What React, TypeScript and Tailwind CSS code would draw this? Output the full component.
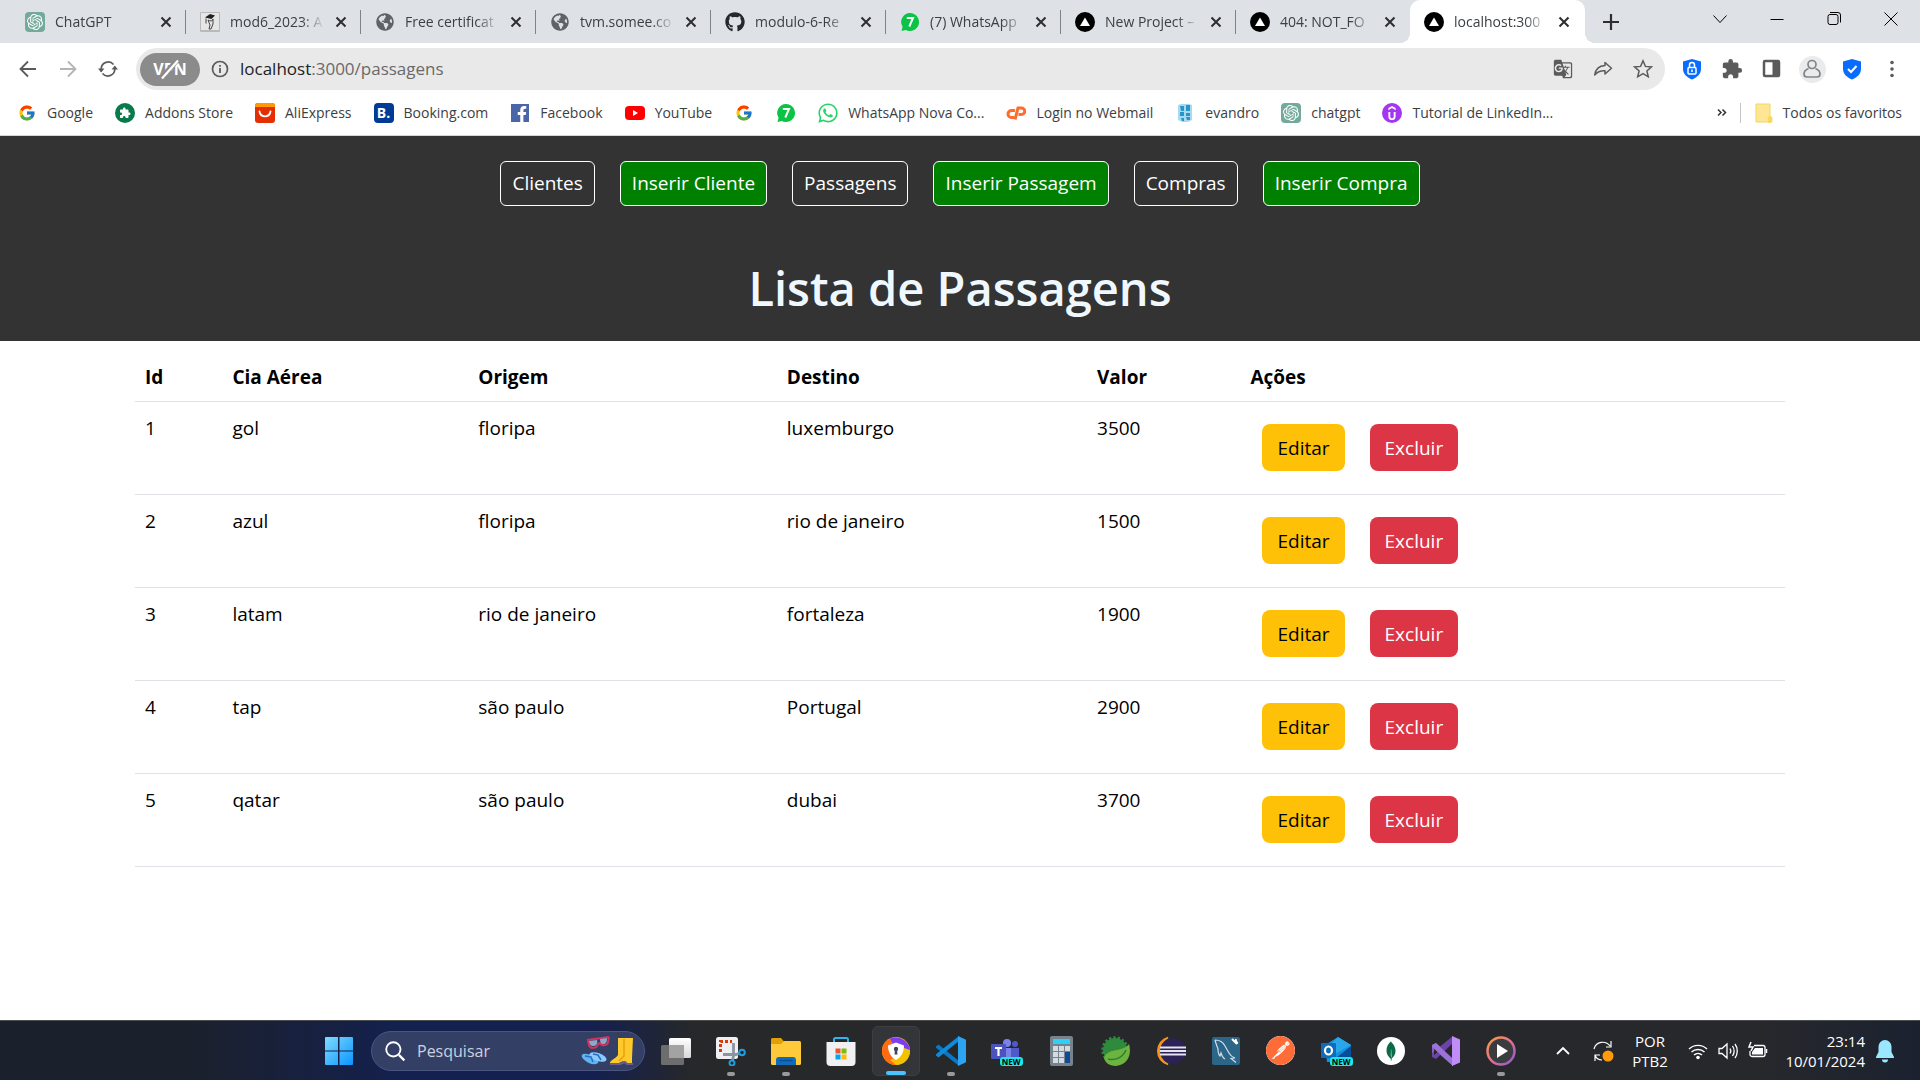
import type { ReactNode } from "react";
import { FcGoogle } from "react-icons/fc";
import { FaFacebookF, FaGithub, FaWhatsapp, FaGlobeAmericas } from "react-icons/fa";
import { SiMongodb, SiOpenai, SiPostman, SiUdemy } from "react-icons/si";
import { MdExtension, MdGTranslate } from "react-icons/md";

/* ---------- favicons ---------- */

const GptIcon = () => (
  <span className="flex size-5 items-center justify-center rounded bg-[#74aa9c] text-white">
    <SiOpenai className="size-4" />
  </span>
);

const GlobeIcon = () => <FaGlobeAmericas className="size-[18px] text-[#5f6368]" />;

const MoodleIcon = () => (
  <svg viewBox="0 0 20 20" className="size-5">
    <rect x="0" y="0" width="20" height="20" rx="1" fill="#b9b9b9" />
    <rect x="1" y="1" width="18" height="17" fill="#e6e6e6" />
    <path d="M5 5.500 10 2l5 1.500-3.500 3.500z" fill="#222" />
    <path d="M6 6.500v5M8 8c2 1.500 5 1 5-1v5l-2 5H9l1-4z" stroke="#444" strokeWidth="1" fill="none" />
  </svg>
);

const VercelIcon = () => (
  <svg viewBox="0 0 20 20" className="size-5">
    <circle cx="10" cy="10" r="10" fill="#000" />
    <path d="M10 5.500 15 14H5z" fill="#fff" />
  </svg>
);

const SevenIcon = () => (
  <svg viewBox="0 0 20 20" className="size-5">
    <path d="M10 1a9 9 0 1 1-4.300 16.900L1.500 19l1.100-4.200A9 9 0 0 1 10 1z" fill="#0bc344" />
    <path d="M6.800 6h6.200L9.300 14.500" fill="none" stroke="#fff" strokeWidth="2" />
  </svg>
);

const AddonsIcon = () => (
  <span className="flex size-5 items-center justify-center rounded-full bg-[#0b7a4b] text-white">
    <MdExtension className="size-3" />
  </span>
);

const AliIcon = () => (
  <svg viewBox="0 0 20 20" className="size-5">
    <rect width="20" height="20" rx="3" fill="#e62e04" />
    <path d="M0 3a3 3 0 0 1 3-3h14a3 3 0 0 1 3 3v1H0z" fill="#ff9b00" />
    <path d="M4.500 8.500c1 6.500 10 6.500 11 0" fill="none" stroke="#fff" strokeWidth="1.800" strokeLinecap="round" />
  </svg>
);

const BookingIcon = () => (
  <span className="flex size-5 items-center justify-center rounded bg-[#003b95] text-sm leading-5 font-bold text-white">B.</span>
);

const FacebookIcon = () => (
  <span className="flex h-[18px] w-[18px] items-end justify-center bg-[#4a66a6] pl-1 text-white">
    <FaFacebookF className="size-4" />
  </span>
);

const YoutubeIcon = () => (
  <svg viewBox="0 0 20 20" className="size-5">
    <rect y="3" width="20" height="14" rx="4" fill="#f00" />
    <path d="M8 7v6l5-3z" fill="#fff" />
  </svg>
);

const CpanelIcon = () => (
  <svg viewBox="0 0 20 20" className="size-5" fill="none" stroke="#ff6c2c" strokeWidth="3">
    <path d="M9 7.500H5.500a3.500 3.500 0 0 0 0 7H8" />
    <path d="M9 16.500 12 5h3.500a3.200 3.200 0 0 1 0 6.500h-3" />
  </svg>
);

const EvandroIcon = () => (
  <svg viewBox="0 0 20 20" className="size-5">
    <path d="M3 2l3-1h8l3 1v15l-4 2H7l-4-2z" fill="#a9d9ef" />
    <path d="M5 3h4v5H6zM11 2h4v6h-4zM5 9h4v4H5zM11 10h4v3h-4zM6 15h3v3H7zM11 14h4v3h-3z" fill="#2596c9" />
  </svg>
);

const UdemyIcon = () => (
  <span className="flex size-5 items-center justify-center rounded-full bg-[#a435f0] text-white">
    <SiUdemy className="size-3.5" />
  </span>
);

const FolderIcon = () => (
  <svg viewBox="0 0 18 20" className="h-5 w-[18px]">
    <path d="M1 1h14v12.500a2 2 0 0 1 2 2V17a2 2 0 0 1-2 2H1z" fill="#ffe694" stroke="#f5d560" />
    <path d="M13 19v-4a2 2 0 0 1 4 0v2a2 2 0 0 1-4 2z" fill="#f8d766" />
  </svg>
);

/* ---------- toolbar drawings ---------- */

const Stroke = ({ children, className }: { children: ReactNode; className: string }) => (
  <svg viewBox="0 0 20 20" className={className} fill="none" stroke="currentColor">
    {children}
  </svg>
);

const CloseX = () => (
  <Stroke className="size-5">
    <path d="M5.500 5.500l9 9M14.500 5.500l-9 9" strokeWidth="2" />
  </Stroke>
);

const Shield = ({ children }: { children: ReactNode }) => (
  <svg viewBox="0 0 20 22" className="h-[22px] w-5" fill="none">
    <path d="M10 1 19 3.500V11c0 5-4 8.500-9 10.500C5 19.500 1 16 1 11V3.500z" fill="#0a6cff" />
    {children}
  </svg>
);

/* ---------- page data ---------- */

type Tab = { title: string; icon: ReactNode; active?: boolean };

const tabs: Tab[] = [
  { title: "ChatGPT", icon: <GptIcon /> },
  { title: "mod6_2023: A", icon: <MoodleIcon /> },
  { title: "Free certificat", icon: <GlobeIcon /> },
  { title: "tvm.somee.co", icon: <GlobeIcon /> },
  { title: "modulo-6-Re", icon: <FaGithub className="size-5 text-[#24292f]" /> },
  { title: "(7) WhatsApp", icon: <SevenIcon /> },
  { title: "New Project –", icon: <VercelIcon /> },
  { title: "404: NOT_FO", icon: <VercelIcon /> },
  { title: "localhost:300", icon: <VercelIcon />, active: true },
];

const bookmarks: { label?: string; name?: string; icon: ReactNode }[] = [
  { label: "Google", icon: <FcGoogle className="size-[18px]" /> },
  { label: "Addons Store", icon: <AddonsIcon /> },
  { label: "AliExpress", icon: <AliIcon /> },
  { label: "Booking.com", icon: <BookingIcon /> },
  { label: "Facebook", icon: <FacebookIcon /> },
  { label: "YouTube", icon: <YoutubeIcon /> },
  { name: "Google", icon: <FcGoogle className="size-[18px]" /> },
  { name: "WhatsApp", icon: <SevenIcon /> },
  { label: "WhatsApp Nova Co...", icon: <FaWhatsapp className="size-[22px] shrink-0 text-[#25d366]" /> },
  { label: "Login no Webmail", icon: <CpanelIcon /> },
  { label: "evandro", icon: <EvandroIcon /> },
  { label: "chatgpt", icon: <GptIcon /> },
  { label: "Tutorial de LinkedIn...", icon: <UdemyIcon /> },
];

const navLinks = [
  { label: "Clientes", insert: false },
  { label: "Inserir Cliente", insert: true },
  { label: "Passagens", insert: false },
  { label: "Inserir Passagem", insert: true },
  { label: "Compras", insert: false },
  { label: "Inserir Compra", insert: true },
];

const flights = [
  { id: 1, cia: "gol", origem: "floripa", destino: "luxemburgo", valor: 3500 },
  { id: 2, cia: "azul", origem: "floripa", destino: "rio de janeiro", valor: 1500 },
  { id: 3, cia: "latam", origem: "rio de janeiro", destino: "fortaleza", valor: 1900 },
  { id: 4, cia: "tap", origem: "são paulo", destino: "Portugal", valor: 2900 },
  { id: 5, cia: "qatar", origem: "são paulo", destino: "dubai", valor: 3700 },
];

/* ---------- browser chrome ---------- */

function TabStrip() {
  return (
    <div className="flex h-[43px] bg-[#dee1e6] pl-[11px]">
      {tabs.map((tab, i) => (
        <div
          key={i}
          className={
            tab.active
              ? "relative -ml-px flex w-[175px] min-w-0 items-center rounded-t-[10px] bg-white pr-[11px] pl-[14px]"
              : "flex w-[175px] min-w-0 items-center pl-[14px]"
          }
        >
          {tab.active && (
            <>
              <span className="absolute bottom-0 -left-2.5 size-2.5 bg-[radial-gradient(circle_at_0_0,#dee1e6_10px,#fff_10px)]" />
              <span className="absolute -right-2.5 bottom-0 size-2.5 bg-[radial-gradient(circle_at_100%_0,#dee1e6_10px,#fff_10px)]" />
            </>
          )}
          <span className="flex size-5 shrink-0 items-center justify-center">{tab.icon}</span>
          <span className="ml-2.5 min-w-0 flex-1 text-sm whitespace-nowrap text-[#3c4043] [mask-image:linear-gradient(to_right,#000_75%,transparent)]">
            {tab.title}
          </span>
          <button aria-label="Fechar guia" className="ml-1.5 shrink-0 text-[#2d2e30]">
            <CloseX />
          </button>
          {!tab.active && (
            <span className={i === tabs.length - 2 ? "ml-[10px] w-px" : "ml-[9px] h-6 w-px bg-[#7f8286]"} />
          )}
        </div>
      ))}
      <button aria-label="Nova guia" className="ml-4 text-[#2d2e30]">
        <Stroke className="size-5">
          <path d="M10 2v16M2 10h16" strokeWidth="2.200" />
        </Stroke>
      </button>
      <div className="ml-auto flex pr-px pb-1.5 text-black">
        <button aria-label="Pesquisar guias" className="flex w-[57px] items-center justify-center">
          <Stroke className="size-5">
            <path d="M3.500 6.500 10 13.500l6.500-7" />
          </Stroke>
        </button>
        <button aria-label="Minimizar" className="flex w-[57px] items-center justify-center">
          <Stroke className="size-5">
            <path d="M3.500 10.500h13" />
          </Stroke>
        </button>
        <button aria-label="Restaurar" className="flex w-[57px] items-center justify-center">
          <Stroke className="size-5">
            <rect x="4" y="5.500" width="10" height="10" rx="2" />
            <path d="M6 3.500h8a2.500 2.500 0 0 1 2.500 2.500v7.500" />
          </Stroke>
        </button>
        <button aria-label="Fechar" className="flex w-[57px] items-center justify-center">
          <Stroke className="size-5">
            <path d="M3.500 3.500l13 13M16.500 3.500l-13 13" />
          </Stroke>
        </button>
      </div>
    </div>
  );
}

function Toolbar() {
  return (
    <div className="flex h-[52px] items-center bg-white pl-2 text-[#5b5b5b]">
      <button aria-label="Voltar" className="flex w-10 justify-center">
        <Stroke className="size-5">
          <path d="M18 10H2.500M10 2.500 2.500 10l7.500 7.500" strokeWidth="1.800" />
        </Stroke>
      </button>
      <button aria-label="Avançar" className="flex w-10 justify-center text-[#b4b4b4]">
        <Stroke className="size-5">
          <path d="M2 10h15.500M10 2.500l7.500 7.500-7.500 7.500" strokeWidth="1.800" />
        </Stroke>
      </button>
      <button aria-label="Recarregar" className="flex w-10 justify-center">
        <Stroke className="size-5">
          <path d="M3.200 12.500V9.500a7 7 0 0 1 12.300-4M16.800 8v2.500a7 7 0 0 1-12.300 4" strokeWidth="1.700" />
          <path d="M0 9.500h6.400L3.200 13.500zM13.600 10.500H20l-3.200-4z" fill="currentColor" stroke="none" />
        </Stroke>
      </button>
      <div className="ml-2 flex h-[42px] flex-1 items-center rounded-full bg-[#e9e9e9] pr-0.5 pl-1">
        <button
          aria-label="VPN"
          className="relative flex h-[33px] w-[60px] items-center justify-center rounded-full bg-[#8b8b8b] text-base leading-5 font-bold text-white"
        >
          VPN
          <svg viewBox="0 0 24 24" className="absolute size-6" fill="none">
            <path d="M3.500 21 20 2" stroke="#8b8b8b" strokeWidth="5" />
            <path d="M4 21.500 20 3.500" stroke="#fff" strokeWidth="2.200" />
          </svg>
        </button>
        <button aria-label="Informações do site" className="ml-2.5">
          <Stroke className="size-5">
            <circle cx="10" cy="10" r="7.500" strokeWidth="1.700" />
            <path d="M10 9v5M10 6v1.700" strokeWidth="1.800" />
          </Stroke>
        </button>
        <div className="ml-2.5 flex-1 text-[17px] text-[#6a6a6a]">
          <span className="text-[#222]">localhost</span>:3000/passagens
        </div>
        <button aria-label="Traduzir" className="flex w-10 justify-center">
          <MdGTranslate className="size-5" />
        </button>
        <button aria-label="Compartilhar" className="flex w-10 justify-center">
          <Stroke className="size-5">
            <path d="M12 3.500l6.500 5.700L12 15v-3.200c-4.500-.3-7.500 1-10.300 4.200C2.500 10.500 6 7 12 6.600z" strokeWidth="1.500" strokeLinejoin="round" />
          </Stroke>
        </button>
        <button aria-label="Favoritar" className="flex w-10 justify-center">
          <Stroke className="size-5">
            <path
              d="M10 1.800l2.400 5.600 6.100.5-4.600 4 1.400 5.900L10 14.700l-5.300 3.100 1.400-5.900-4.600-4 6.100-.5z"
              strokeWidth="1.500"
            />
          </Stroke>
        </button>
      </div>
      <div className="flex items-center pr-2 pl-[7px]">
        <button aria-label="Proteção" className="flex w-10 justify-center">
          <Shield>
            <rect x="6" y="9.500" width="8" height="6.500" rx="1" stroke="#fff" strokeWidth="1.500" />
            <path d="M7.500 9V7a2.500 2.500 0 0 1 5 0v2M10 11.500v2.500" stroke="#fff" strokeWidth="1.500" />
          </Shield>
        </button>
        <button aria-label="Extensões" className="flex w-10 justify-center">
          <MdExtension className="size-[22px]" />
        </button>
        <button aria-label="Painel lateral" className="flex w-10 justify-center">
          <Stroke className="size-5">
            <rect x="2" y="2" width="15" height="15" rx="1" strokeWidth="2.500" />
            <path d="M11 2h6v15h-6z" fill="currentColor" />
          </Stroke>
        </button>
        <button aria-label="Perfil" className="flex w-10 justify-center">
          <span className="flex size-[27px] items-center justify-center rounded-full bg-[#ebebec] text-[#7f868c]">
            <Stroke className="size-5">
              <circle cx="10" cy="5.500" r="4" strokeWidth="1.700" />
              <path d="M6.500 9.500c-3 1.200-4.500 3-4.500 5.500 0 2 1 3 3 3h10c2 0 3-1 3-3 0-2.500-1.500-4.300-4.500-5.500" strokeWidth="1.700" />
            </Stroke>
          </span>
        </button>
        <button aria-label="Segurança" className="flex w-10 justify-center">
          <Shield>
            <path d="M6 11l3 3 5.500-6" stroke="#fff" strokeWidth="2" />
          </Shield>
        </button>
        <button aria-label="Menu" className="flex w-10 justify-center">
          <svg viewBox="0 0 20 20" className="size-5" fill="currentColor">
            <circle cx="10" cy="3.500" r="1.800" />
            <circle cx="10" cy="10" r="1.800" />
            <circle cx="10" cy="16.500" r="1.800" />
          </svg>
        </button>
      </div>
    </div>
  );
}

function BookmarkBar() {
  return (
    <div className="flex h-[41px] items-center border-b border-[#d5d5d5] bg-white pr-[18px] pb-1 pl-[17px] text-sm whitespace-nowrap text-[#3c4043]">
      <div className="flex items-center gap-[22px]">
        {bookmarks.map((b, i) => (
          <a key={i} href="#" aria-label={b.label ?? b.name} className="flex items-center gap-2.5">
            <span className="flex size-5 items-center justify-center">{b.icon}</span>
            {b.label}
          </a>
        ))}
      </div>
      <button aria-label="Mais favoritos" className="ml-auto">
        <Stroke className="size-5 text-[#333]">
          <path d="M6 6.500l3 3-3 3M10.500 6.500l3 3-3 3" strokeWidth="1.500" />
        </Stroke>
      </button>
      <span className="mr-3.5 ml-2 h-5 w-px bg-[#c4c4c4]" />
      <button className="flex items-center gap-2.5">
        <FolderIcon />
        Todos os favoritos
      </button>
    </div>
  );
}

/* ---------- application ---------- */

function Header() {
  return (
    <header className="flex flex-col items-center bg-[#333] pt-[25px] pb-[21px]">
      <nav className="flex gap-[25px]">
        {navLinks.map((link) => (
          <a
            key={link.label}
            href="#"
            className={
              link.insert
                ? "rounded-md border border-white bg-[#008000] px-[11px] py-2 text-[19px] leading-[27px] text-white"
                : "rounded-md border border-white px-[11px] py-2 text-[19px] leading-[27px] text-white"
            }
          >
            {link.label}
          </a>
        ))}
      </nav>
      <h1 className="mt-[50px] text-[47px] leading-[64px] font-semibold text-[aliceblue]">Lista de Passagens</h1>
    </header>
  );
}

function FlightTable() {
  return (
    <table className="w-full table-fixed text-left text-[19px] leading-[30px] text-black">
      <colgroup>
        <col className="w-[5.300%]" />
        <col className="w-[14.900%]" />
        <col className="w-[18.700%]" />
        <col className="w-[18.800%]" />
        <col className="w-[9.300%]" />
        <col />
      </colgroup>
      <thead>
        <tr className="border-b border-[#dee2e6]">
          {["Id", "Cia Aérea", "Origem", "Destino", "Valor", "Ações"].map((h) => (
            <th key={h} scope="col" className="px-2.5 pt-[21px] pb-[9px] font-bold">
              {h}
            </th>
          ))}
        </tr>
      </thead>
      <tbody>
        {flights.map((f) => (
          <tr key={f.id} className="border-b border-[#dee2e6] align-top">
            <td className="px-2.5 pt-[11px]">{f.id}</td>
            <td className="px-2.5 pt-[11px]">{f.cia}</td>
            <td className="px-2.5 pt-[11px]">{f.origem}</td>
            <td className="px-2.5 pt-[11px]">{f.destino}</td>
            <td className="px-2.5 pt-[11px]">{f.valor}</td>
            <td className="px-2.5">
              <div className="flex gap-[25px] px-3 pt-[22px] pb-[23px]">
                <button className="rounded-lg bg-[#ffc107] px-[15px] pt-[9px] pb-2 text-black">Editar</button>
                <button className="rounded-lg bg-[#dc3545] px-[15px] pt-[9px] pb-2 text-white">Excluir</button>
              </div>
            </td>
          </tr>
        ))}
      </tbody>
    </table>
  );
}

/* ---------- taskbar ---------- */

const Art = ({ children }: { children: ReactNode }) => (
  <svg viewBox="0 0 30 30" className="size-[30px]" fill="none">
    {children}
  </svg>
);

const NewBadge = () => (
  <span className="absolute -right-0.5 bottom-0 rounded-[3px] bg-[#1ee6e6] px-0.5 text-[8px] leading-[9px] font-bold text-black">NEW</span>
);

type App = { name: string; icon: ReactNode; running?: boolean; focused?: boolean };

const apps: App[] = [
  {
    name: "Visão de tarefas",
    icon: (
      <Art>
        <defs>
          <linearGradient id="tv" x2="0" y2="1">
            <stop stopColor="#fff" />
            <stop offset="1" stopColor="#d8d8d8" />
          </linearGradient>
        </defs>
        <rect x="8" y="2" width="22" height="20" rx="1.500" fill="url(#tv)" />
        <rect x="0" y="9" width="23" height="20" rx="1.500" fill="#6d6d6d" />
        <path d="M8 9h15v13H8z" fill="#a3a3a3" />
      </Art>
    ),
  },
  {
    name: "Ferramenta de Captura",
    running: true,
    icon: (
      <Art>
        <rect x="0" y="1" width="22" height="22" rx="2.500" fill="#f0f0f4" />
        <path d="M4.500 16V5.500H16" stroke="#d83b01" strokeWidth="3" strokeDasharray="3 2" />
        <path d="M17.500 7v13l-1 4M7 18.500h13l4-1.500" stroke="#8b959e" strokeWidth="2.800" />
        <circle cx="26" cy="16.500" r="2.800" stroke="#1f9de0" strokeWidth="2" />
        <circle cx="16" cy="27" r="2.500" stroke="#1f9de0" strokeWidth="2" />
      </Art>
    ),
  },
  {
    name: "Explorador de Arquivos",
    running: true,
    icon: (
      <Art>
        <path d="M0 3.500A1.500 1.500 0 0 1 1.500 2H10l3 3.500v5H0z" fill="#e2a008" />
        <path d="M0 8h10l3-3h15.500A1.500 1.500 0 0 1 30 6.500v21a1.500 1.500 0 0 1-1.500 1.500h-27A1.500 1.500 0 0 1 0 27.500z" fill="#ffca3a" />
        <path d="M5 29v-5a3 3 0 0 1 3-3h14a3 3 0 0 1 3 3v5z" fill="#0f6cbd" />
        <path d="M8.500 24.500h13" stroke="#0a4f91" strokeWidth="1.500" />
      </Art>
    ),
  },
  {
    name: "Microsoft Store",
    icon: (
      <Art>
        <path d="M8 7V3.500A1.500 1.500 0 0 1 9.500 2h11A1.500 1.500 0 0 1 22 3.500V7" stroke="#2fb4f2" strokeWidth="2" />
        <path d="M.5 6h29v20a4 4 0 0 1-4 4h-21a4 4 0 0 1-4-4z" fill="#f1f1f3" />
        <path d="M9.500 12.500h5v5h-5z" fill="#f35325" />
        <path d="M15.500 12.500h5v5h-5z" fill="#81bc06" />
        <path d="M9.500 18.500h5v5h-5z" fill="#05a6f0" />
        <path d="M15.500 18.500h5v5h-5z" fill="#ffba08" />
      </Art>
    ),
  },
  {
    name: "Navegador",
    running: true,
    focused: true,
    icon: (
      <Art>
        <circle cx="15" cy="15" r="14" fill="#ffb20e" />
        <path d="M15 29C7.300 29 1 22.700 1 15 1 9 5 4 10 2l6 9-2 12z" fill="#ff6a13" />
        <path d="M9 2.500C17-1 28 4 29 14c-2 2-4 2-6-1L12 8z" fill="#7c3df0" />
        <path d="M29 14c0 8-5 14.500-14 15l-6-5 12-6 2-6z" fill="#f2c200" />
        <path d="M15 6.500l8 3c0 7-3 11.500-8 14.500-5-3-8-7.500-8-14.500z" fill="#fff" />
        <circle cx="15" cy="13" r="2.200" fill="#3d4657" />
        <path d="M14 14h2l.5 4.500h-3z" fill="#3d4657" />
      </Art>
    ),
  },
  {
    name: "Visual Studio Code",
    running: true,
    icon: (
      <Art>
        <path d="M0 10.500 2.500 8.500 23 25v5L0 11.800z" fill="#0879c8" />
        <path d="M0 19.500 2.500 21.500 23 5V0L0 18.200z" fill="#0e8bdb" />
        <path d="M22 0l7 3.200c.6.300 1 .8 1 1.500v20.600c0 .7-.4 1.200-1 1.500L22 30z" fill="#2da4f2" />
      </Art>
    ),
  },
  {
    name: "Microsoft Teams",
    icon: (
      <>
        <Art>
          <circle cx="16" cy="7" r="4" fill="#7b83eb" />
          <circle cx="24" cy="8" r="3" fill="#5059c9" />
          <path d="M18 12h10v12H18z" fill="#5059c9" />
          <path d="M10 12h10v13H10z" fill="#7b83eb" />
          <rect x="0" y="8" width="15" height="15" rx="1" fill="#4b53bc" />
          <path d="M4 12h7M7.500 12v8" stroke="#fff" strokeWidth="2.200" />
        </Art>
        <NewBadge />
      </>
    ),
  },
  {
    name: "Calculadora",
    icon: (
      <Art>
        <rect x="4" y="0" width="23" height="30" rx="2" fill="#77828c" />
        <rect x="7" y="3" width="17" height="5" fill="#2fd0f5" />
        <path d="M7 10h5v5H7zM13 10h5v5h-5zM19 10h5v5h-5zM7 16h5v5H7zM13 16h5v5h-5zM7 22h5v5H7zM13 22h5v5h-5z" fill="#d3dbe2" />
        <path d="M19 16h5v11h-5z" fill="#0f4a94" />
      </Art>
    ),
  },
  {
    name: "Spring Tool Suite",
    icon: (
      <Art>
        <circle cx="14" cy="14" r="12" fill="#2e8b3d" stroke="#2e8b3d" strokeWidth="3.500" strokeDasharray="2.200 2" />
        <path d="M28 8c3 10-1 21-13 22C9 30 4 27 3 22c4-11 18-5 25-14z" fill="#6db33f" />
        <path d="M7 23c8 2 15-2 18-9" stroke="#2e7d32" strokeWidth="1.500" />
      </Art>
    ),
  },
  {
    name: "Eclipse",
    icon: (
      <Art>
        <path d="M12 1.500a14 14 0 0 0 0 27A16 16 0 0 1 12 1.500z" stroke="#f7941e" strokeWidth="1.500" fill="#f7941e" />
        <circle cx="17" cy="15" r="13" fill="#2c2255" />
        <path d="M4 11.500h26M4 15h26M4 18.500h26" stroke="#e6e3f0" strokeWidth="2" />
      </Art>
    ),
  },
  {
    name: "MySQL Workbench",
    icon: (
      <Art>
        <rect x="1" y="1" width="28" height="28" rx="2" fill="#2b6587" />
        <path
          d="M4 4c4 0 8 2 10 6l4 7c1 2 3 4 6 5l-4 .500 5 4M4 4c1 4 2 6 3 9 0 3 0 5 2 7l1-3c1 3 2 5 4 6"
          stroke="#cfe0ea"
          strokeWidth="1.200"
        />
        <path d="M21 3l5 5m-1-5a3 3 0 0 0 2 4" stroke="#fff" strokeWidth="2" />
      </Art>
    ),
  },
  { name: "Postman", icon: <SiPostman className="size-[29px] rounded-full bg-white text-[#ff6c37]" /> },
  {
    name: "Outlook",
    icon: (
      <>
        <Art>
          <path d="M4 9 17 1l13 8v17H6z" fill="#1490df" />
          <path d="M17 1l13 8-16 9-7-7z" fill="#28a8ea" />
          <path d="M30 10v16H10z" fill="#0a4c9c" />
          <rect x="0" y="7" width="15" height="15" rx="1" fill="#0f6cbd" />
          <ellipse cx="7.500" cy="14.500" rx="3.500" ry="4" stroke="#fff" strokeWidth="2.200" />
        </Art>
        <NewBadge />
      </>
    ),
  },
  {
    name: "MongoDB Compass",
    icon: (
      <span className="flex size-[28px] items-center justify-center rounded-full bg-white text-[#0a6b4b]">
        <SiMongodb className="size-5" />
      </span>
    ),
  },
  {
    name: "Visual Studio",
    icon: (
      <Art>
        <path d="M1 9l4-2 17 16v7L3 13v8l-2-1z" fill="#8661c5" />
        <path d="M1 21l4 2L22 7V0L1 17z" fill="#6c44a8" />
        <path d="M3 12l5 3-5 4z" fill="#26282b" />
        <path d="M5 7l17 16v7L1 11V9z" fill="#9a72d8" />
        <path d="M21 0l8 3.500v23L21 30z" fill="#c08cf5" />
      </Art>
    ),
  },
  {
    name: "Filmes e TV",
    running: true,
    icon: (
      <Art>
        <defs>
          <linearGradient id="mv" x2="1" y2="1">
            <stop stopColor="#ff9d3c" />
            <stop offset="0.500" stopColor="#e0708f" />
            <stop offset="1" stopColor="#8f55d8" />
          </linearGradient>
        </defs>
        <circle cx="15" cy="15" r="13.500" stroke="url(#mv)" strokeWidth="2.500" fill="#3a3c3f" />
        <path d="M11 8v14l11-7z" fill="#fff" />
      </Art>
    ),
  },
];

function SummerArt() {
  return (
    <svg viewBox="0 0 54 30" className="h-[30px] w-[54px]" fill="none">
      <path d="M7 4l22-3M8 5l1 4c1 4 8 4 9-1l2-1c2 4 8 2 8-1l1-5" stroke="#d4335c" strokeWidth="2" />
      <path d="M9 5l8-1c1 4-1 6-4 6-2 0-4-2-4-5zM20 3l7-1c0 4-1 6-4 6-2 0-3-2-3-5z" fill="#8ea6c8" />
      <ellipse cx="10" cy="23" rx="9" ry="4" transform="rotate(25 10 23)" fill="#5fb4f5" />
      <ellipse cx="18" cy="21" rx="9" ry="4" transform="rotate(20 18 21)" fill="#8accff" />
      <path d="M5 20l6 1 2 5M13 18l5 1 3 5" stroke="#2a6fc2" strokeWidth="1.500" />
      <path d="M38 2h15l-1 20v5h-7l-2-2-6 3h-7c-1-4 6-5 8-9z" fill="#fdc92b" />
      <path d="M44 3v17l-5 5" stroke="#e79f10" strokeWidth="1.500" />
      <path d="M30 28h10l5-2 2 2h6" stroke="#6d5c93" strokeWidth="2" />
    </svg>
  );
}

function Taskbar() {
  return (
    <footer className="flex h-[60px] items-center border-t border-[#4b4c4e] bg-[linear-gradient(90deg,#1b212c_0%,#1b212c_10%,#14204f_21%,#14204f_31%,#26282a_36%,#26282c_92%,#1b2130_100%)] text-white">
      <div className="flex-1" />
      <button aria-label="Iniciar" className="flex w-[54px] justify-center">
        <svg viewBox="0 0 28 28" className="size-7">
          <defs>
            <linearGradient id="win" x2="1" y2="1">
              <stop stopColor="#7fdcff" />
              <stop offset="1" stopColor="#0a95ff" />
            </linearGradient>
          </defs>
          <path d="M0 1a1 1 0 0 1 1-1h12v13.500H0zM14.500 0H27a1 1 0 0 1 1 1v12.500H14.500zM0 14.500h13V28H1a1 1 0 0 1-1-1zM14.500 14.500H28V27a1 1 0 0 1-1 1H14.500z" fill="url(#win)" />
        </svg>
      </button>
      <label className="ml-[5px] flex h-10 w-[274px] items-center rounded-full border border-[#4a5680] bg-[#343f66] pr-2.5 pl-3">
        <Stroke className="size-[22px] shrink-0">
          <circle cx="8.500" cy="8.500" r="6.500" strokeWidth="1.700" />
          <path d="M13.500 13.500l5 5" strokeWidth="2" />
        </Stroke>
        <input
          type="text"
          aria-label="Pesquisar"
          placeholder="Pesquisar"
          className="ml-[11px] min-w-0 flex-1 bg-transparent text-[16px] outline-none placeholder:text-[#cdd1de]"
        />
        <SummerArt />
      </label>
      <div className="flex pl-[3px]">
        {apps.map((app) => (
          <button key={app.name} aria-label={app.name} className="flex w-[55px] justify-center">
            <span
              className={
                app.focused
                  ? "relative flex h-[50px] w-12 items-center justify-center rounded-md border border-[#3d3f42] bg-[#333538]"
                  : "relative flex h-[50px] w-12 items-center justify-center"
              }
            >
              <span className="relative flex">{app.icon}</span>
              {app.running && (
                <span
                  className={
                    app.focused
                      ? "absolute bottom-0 h-1 w-5 rounded-full bg-[#4cc2ff]"
                      : "absolute bottom-0 h-1 w-2 rounded-full bg-[#9a9a9a]"
                  }
                />
              )}
            </span>
          </button>
        ))}
      </div>
      <div className="flex items-center pr-[25px] pl-[15px] text-[15px] leading-5">
        <button aria-label="Mostrar ícones ocultos" className="flex w-10 justify-center">
          <Stroke className="size-5">
            <path d="M4 13l6-6 6 6" strokeWidth="1.800" />
          </Stroke>
        </button>
        <button aria-label="Atualização" className="flex w-10 justify-center">
          <svg viewBox="0 0 24 24" className="size-6" fill="none">
            <path d="M3 10a9 9 0 0 1 16-3M20 2v6h-5M4 22v-6h5M4 16c1 3 4 5 7 5" stroke="#fff" strokeWidth="1.200" />
            <circle cx="17" cy="17" r="5.500" fill="#ff9a0a" />
          </svg>
        </button>
        <button className="flex w-[54px] flex-col items-center">
          <span>POR</span>
          <span>PTB2</span>
        </button>
        <button aria-label="Rede, som e bateria" className="ml-1.5 flex">
          <span className="flex w-[30px] justify-center">
            <Stroke className="size-5">
              <path d="M1 8a13 13 0 0 1 18 0M3.500 11a9.500 9.500 0 0 1 13 0M6 14a6 6 0 0 1 8 0" strokeWidth="1.400" />
              <circle cx="10" cy="16.500" r="1.800" fill="currentColor" stroke="none" />
            </Stroke>
          </span>
          <span className="flex w-[30px] justify-center">
            <Stroke className="size-5">
              <path d="M1 7.500h3L9 3v14l-5-4.500H1zM12 7.500c1 1.500 1 3.500 0 5M14.500 5c2 3 2 7 0 10M17 3c3 4 3 10 0 14" strokeWidth="1.300" />
            </Stroke>
          </span>
          <span className="flex w-[30px] justify-center">
            <Stroke className="size-5">
              <path d="M6 4.500h9a2 2 0 0 1 2 2v7a2 2 0 0 1-2 2H4a2 2 0 0 1-2-2V10" strokeWidth="1.300" />
              <path d="M7 7h8v6.500H4V11z" fill="currentColor" stroke="none" />
              <path d="M18.500 8v4M3 1 1 6h4L3 10" strokeWidth="1.500" />
            </Stroke>
          </span>
        </button>
        <button className="flex w-[92px] flex-col items-end">
          <span>23:14</span>
          <span>10/01/2024</span>
        </button>
        <button aria-label="Notificações" className="ml-2.5 text-[#9be7ff]">
          <svg viewBox="0 0 20 24" className="h-6 w-5" fill="currentColor">
            <path d="M10 1a6.500 6.500 0 0 0-6.500 6.500V13L1 18v1h18v-1l-2.500-5V7.500A6.500 6.500 0 0 0 10 1zM7 20.500h6a3 3 0 0 1-6 0z" />
          </svg>
        </button>
      </div>
    </footer>
  );
}

export default function App() {
  return (
    <div className="flex min-h-screen flex-col bg-white font-['Open_Sans',sans-serif]">
      <TabStrip />
      <Toolbar />
      <BookmarkBar />
      <Header />
      <main className="mx-auto w-full max-w-[1650px] flex-1">
        <FlightTable />
      </main>
      <Taskbar />
    </div>
  );
}
